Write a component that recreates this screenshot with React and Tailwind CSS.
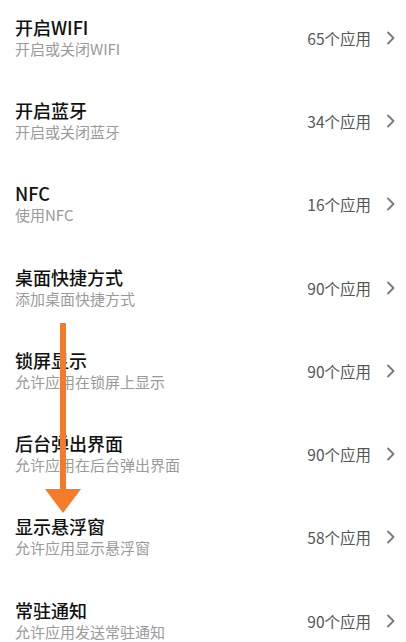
import React from "react";

const items = [
  ["开启WIFI", "开启或关闭WIFI", "65个应用"],
  ["开启蓝牙", "开启或关闭蓝牙", "34个应用"],
  ["NFC", "使用NFC", "16个应用"],
  ["桌面快捷方式", "添加桌面快捷方式", "90个应用"],
  ["锁屏显示", "允许应用在锁屏上显示", "90个应用"],
  ["后台弹出界面", "允许应用在后台弹出界面", "90个应用"],
  ["显示悬浮窗", "允许应用显示悬浮窗", "58个应用"],
  ["常驻通知", "允许应用发送常驻通知", "90个应用"],
];

function Chevron() {
  return (
    <svg width="10" height="14" viewBox="0 0 10 14" className="ml-[15px]">
      <path d="M2 1.5 L7.5 7 L2 12.5" fill="none" stroke="#7a7a7a" strokeWidth="1.8" strokeLinecap="round" strokeLinejoin="round" />
    </svg>
  );
}

export default function App() {
  return (
    <div
      className="relative w-[406px] h-[642px] overflow-hidden bg-white"
      style={{ fontFamily: '"Noto Sans CJK SC", "Noto Sans", sans-serif' }}
    >
      <div className="-mt-[4px] flex flex-col">
        {items.map(([t, s, c]) => (
          <div key={t} className="h-[83.3px] shrink-0 flex items-center pl-[15px] pr-[10px]">
            <div className="flex-1 flex flex-col">
              <div className="text-[18px] leading-[22px] text-[#111] font-medium">{t}</div>
              <div className="text-[15px] leading-[22px] text-[#9a9a9a]">{s}</div>
            </div>
            <div className="flex items-center">
              <span className="text-[15.5px] leading-[22px] text-[#555]">{c}</span>
              <Chevron />
            </div>
          </div>
        ))}
      </div>
      <svg className="absolute left-0 top-0" width="406" height="642" viewBox="0 0 406 642">
        <rect x="60" y="323" width="6" height="168" fill="#f47b2a" />
        <polygon points="45,489 81,489 63,513" fill="#f47b2a" />
      </svg>
    </div>
  );
}
